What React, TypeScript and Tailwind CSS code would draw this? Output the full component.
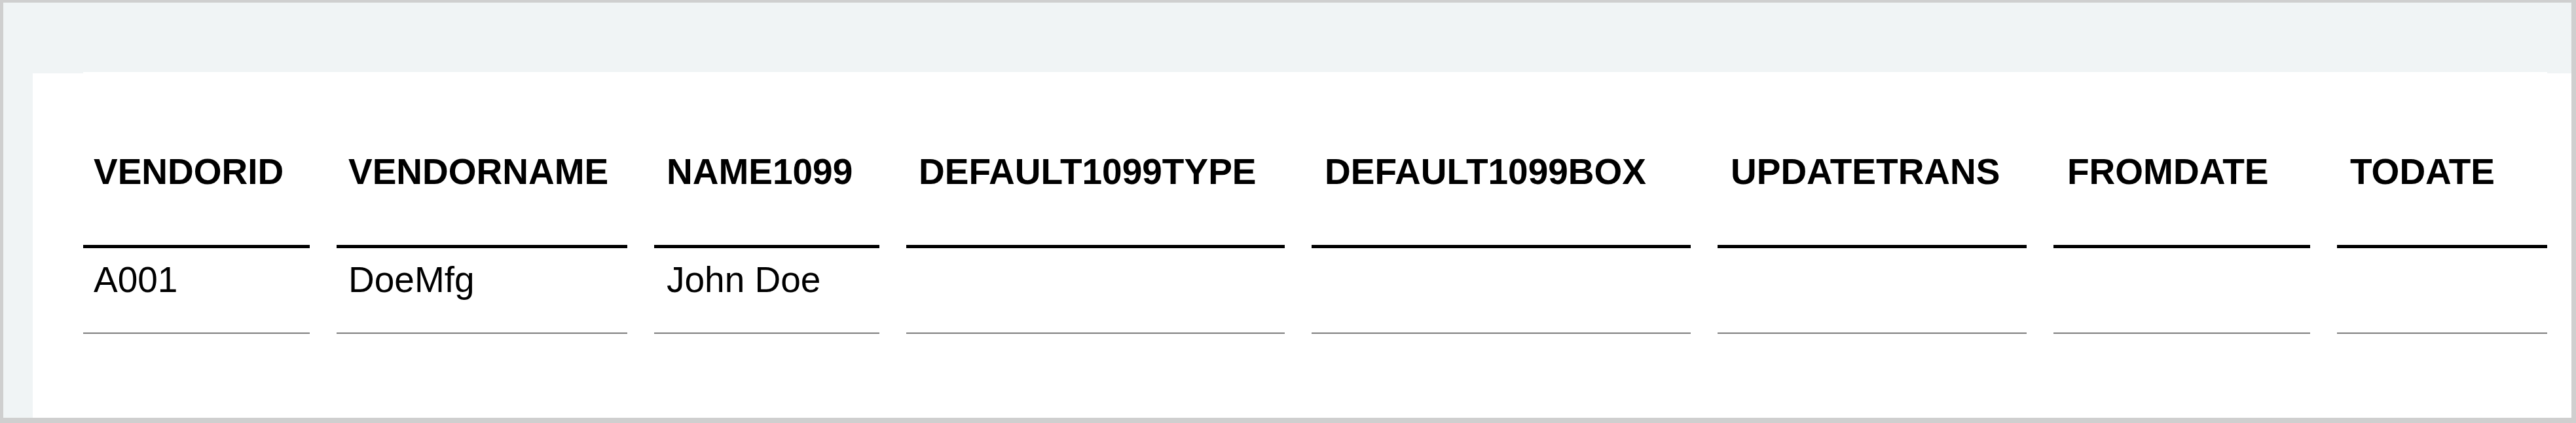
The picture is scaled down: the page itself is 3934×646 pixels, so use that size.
const columns = [
  { key: 'VENDORID', width: 'w-[346px]', pad: 'pl-[16px]', value: 'A001' },
  { key: 'VENDORNAME', width: 'w-[444px]', pad: 'pl-[18px]', value: 'DoeMfg' },
  { key: 'NAME1099', width: 'w-[344px]', pad: 'pl-[19px]', value: 'John Doe' },
  { key: 'DEFAULT1099TYPE', width: 'w-[578px]', pad: 'pl-[19px]', value: '' },
  { key: 'DEFAULT1099BOX', width: 'w-[579px]', pad: 'pl-[20px]', value: '' },
  { key: 'UPDATETRANS', width: 'w-[472px]', pad: 'pl-[20px]', value: '' },
  { key: 'FROMDATE', width: 'w-[392px]', pad: 'pl-[21px]', value: '' },
  { key: 'TODATE', width: 'w-[321px]', pad: 'pl-[20px]', value: '' },
];

const App = () => {
  return (
    <div className="w-[3934px] h-[646px] border-[#cfcfcf] border-t-4 border-l-[5px] border-r-[7px] border-b-[8px] bg-[#f0f4f5] overflow-hidden font-['Liberation_Sans',Arial,sans-serif] text-black">
      <div className="flow-root ml-[45px] mt-[108px] h-[526px] bg-white">
        <div className="ml-[77px] -mt-[2px] pt-[2px] w-[3763px] bg-white">
          <div className="flex gap-x-[41px]">
            {columns.map((col) => (
              <div key={col.key} className={`${col.width} shrink-0`}>
                <div className={`${col.pad} pt-[119px] pb-[80px] border-b-[5px] border-black text-[55px] leading-[63px] font-bold whitespace-nowrap`}>
                  {col.key}
                </div>
                <div className={`${col.pad} pt-[17px] h-[130px] border-b border-[#444] shadow-[0_1px_0_#b0b0b0] text-[55px] leading-[63px] whitespace-nowrap`}>
                  {col.value}
                </div>
              </div>
            ))}
          </div>
        </div>
      </div>
    </div>
  );
};

export default App;
